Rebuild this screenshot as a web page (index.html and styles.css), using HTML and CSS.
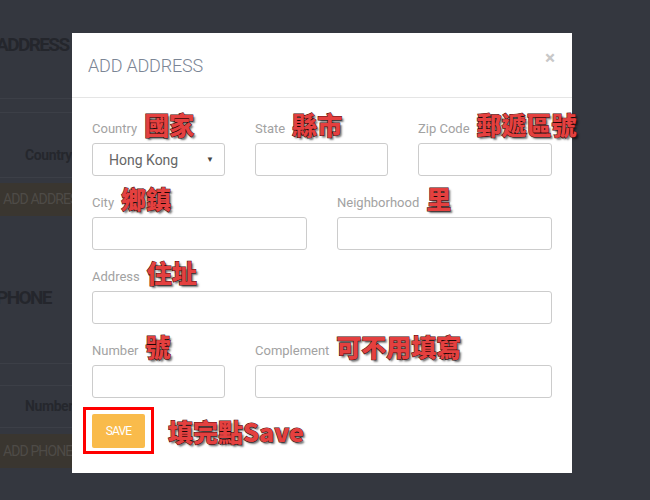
FILE: index.html
```html
<!DOCTYPE html>
<html lang="zh-Hant">
<head>
<meta charset="utf-8">
<title>Add Address</title>
<link rel="stylesheet" href="styles.css">
</head>
<body>
<div class="page">
  <h2 class="bg-title first">ADDRESS</h2>
  <div class="bg-line l1"></div>
  <div class="bg-line l2"></div>
  <div class="bg-th c1">Country</div>
  <div class="bg-line l3"></div>
  <div class="bg-bar b1">ADD ADDRESS</div>
  <h2 class="bg-title second">PHONE</h2>
  <div class="bg-line l4"></div>
  <div class="bg-line l5"></div>
  <div class="bg-th c2">Number</div>
  <div class="bg-line l6"></div>
  <div class="bg-bar b2">ADD PHONE</div>
</div>

<div class="modal">
  <div class="modal-header">
    <h3 class="modal-title">ADD ADDRESS</h3>
    <span class="close">&times;</span>
  </div>
  <div class="modal-body">
    <div class="row three">
      <div class="field">
        <label class="lbl">Country <span class="note">國家</span></label>
        <div class="select">
          <span class="select-value">Hong Kong</span>
          <span class="caret">▼</span>
        </div>
      </div>
      <div class="field">
        <label class="lbl">State <span class="note">縣市</span></label>
        <div class="input"></div>
      </div>
      <div class="field">
        <label class="lbl">Zip Code <span class="note">郵遞區號</span></label>
        <div class="input"></div>
      </div>
    </div>
    <div class="row two">
      <div class="field">
        <label class="lbl">City <span class="note">鄉鎮</span></label>
        <div class="input"></div>
      </div>
      <div class="field">
        <label class="lbl">Neighborhood <span class="note">里</span></label>
        <div class="input"></div>
      </div>
    </div>
    <div class="row one">
      <div class="field">
        <label class="lbl">Address <span class="note">住址</span></label>
        <div class="input"></div>
      </div>
    </div>
    <div class="row four">
      <div class="field">
        <label class="lbl">Number <span class="note">號</span></label>
        <div class="input"></div>
      </div>
      <div class="field">
        <label class="lbl">Complement <span class="note">可不用填寫</span></label>
        <div class="input"></div>
      </div>
    </div>
    <div class="save-row">
      <span class="highlight"><button class="btn-save">SAVE</button></span>
      <span class="note big">填完點Save</span>
    </div>
  </div>
</div>
</body>
</html>
```

FILE: styles.css
```css
html, body {
  margin: 0;
  padding: 0;
}
body {
  width: 650px;
  height: 500px;
  overflow: hidden;
  background: #34373f;
  font-family: Roboto, "Noto Sans", sans-serif;
  position: relative;
}

/* background page (dimmed) */
.page {
  width: 260px;
  margin-left: -4px;
  display: flex;
  flex-direction: column;
}
.bg-title {
  margin: 0;
  font-size: 19px;
  line-height: 20px;
  font-weight: 700;
  color: #24262c;
  letter-spacing: -1.6px;
}
.bg-title.first { margin-top: 35px; }
.bg-title.second { margin-top: 72px; }
.bg-line {
  height: 1px;
  background: #3c3f47;
}
.l1 { margin-top: 43px; }
.l2 { margin-top: 13px; }
.l3 { margin-top: 14px; }
.l4 { margin-top: 55px; }
.l5 { margin-top: 21px; }
.l6 { margin-top: 13px; }
.bg-th {
  font-size: 14px;
  font-weight: 700;
  color: #25272d;
  line-height: 16px;
  padding-left: 29px;
  letter-spacing: -0.4px;
}
.c1 { margin-top: 34px; }
.c2 { margin-top: 12px; }
.bg-bar {
  background: #3a3630;
  color: #4e4b47;
  font-size: 14px;
  letter-spacing: -0.9px;
  padding-left: 7px;
  line-height: 33px;
  height: 33px;
}
.b1 { margin-top: 5px; }
.b2 { margin-top: 6px; height: 34px; line-height: 34px; }

/* modal */
.modal {
  position: absolute;
  left: 72px;
  top: 33px;
  width: 500px;
  background: #fff;
}
.modal-header {
  height: 64px;
  border-bottom: 1px solid #e5e5e5;
  padding: 0 16px;
  display: flex;
  justify-content: space-between;
  align-items: center;
}
.modal-title {
  margin: 0;
  font-size: 18px;
  font-weight: 300;
  color: #7b8595;
  letter-spacing: -0.2px;
}
.close {
  align-self: flex-start;
  margin-top: 15px;
  margin-right: 1px;
  font-size: 19px;
  font-weight: 700;
  color: #c8c8c8;
  line-height: 20px;
}
.modal-body {
  padding: 20px 20px 25px;
}
.row {
  display: grid;
  column-gap: 30px;
  margin-bottom: 16px;
}
.row.three { grid-template-columns: 133px 133px 134px; }
.row.two { grid-template-columns: 1fr 1fr; }
.row.one { grid-template-columns: 1fr; }
.row.four { grid-template-columns: 133px 1fr; }

.lbl {
  display: flex;
  align-items: center;
  gap: 7px;
  height: 20px;
  font-size: 13px;
  color: #a2a2a2;
  white-space: nowrap;
}
.note {
  font-family: "Noto Sans CJK TC", "Noto Sans CJK SC", sans-serif;
  font-weight: 900;
  font-size: 25px;
  line-height: 20px;
  color: #e4403f;
  -webkit-text-stroke: 1px #3a0a0a;
  paint-order: stroke fill;
  text-shadow: 2px 2px 2px rgba(0, 0, 0, 0.55);
  transform: translateY(-4px);
  white-space: nowrap;
}
.input, .select {
  box-sizing: border-box;
  height: 33px;
  margin-top: 5px;
  border: 1px solid #cccccc;
  border-radius: 3px;
  background: #fff;
}
.select {
  display: flex;
  align-items: center;
  justify-content: space-between;
  padding: 0 10px 0 16px;
}
.select-value {
  font-size: 14px;
  color: #666;
}
.caret {
  font-size: 8px;
  color: #444;
}
.save-row {
  display: flex;
  align-items: center;
  gap: 14px;
}
.highlight {
  display: flex;
  border: 3px solid #ff0000;
  padding: 4px 6px 3px;
  margin: -7px 0 -6px -9px;
}
.btn-save {
  width: 53px;
  height: 34px;
  border: 0;
  border-radius: 2px;
  background: #f9bb4b;
  color: #fff;
  font-family: Roboto, sans-serif;
  font-size: 12px;
  letter-spacing: -0.8px;
  padding: 0;
}
.note.big {
  transform: translateY(0);
}
```
